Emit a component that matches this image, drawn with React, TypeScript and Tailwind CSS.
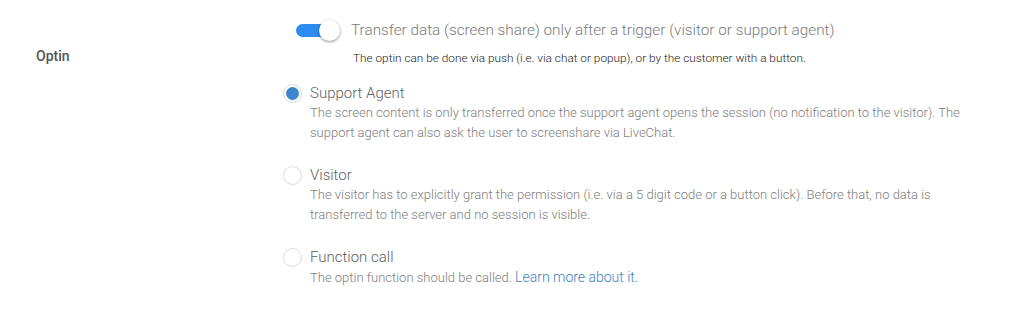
function Radio({ checked }: { checked?: boolean }) {
  return (
    <span className="mt-[1px] flex h-[19px] w-[19px] shrink-0 items-center justify-center rounded-full border border-[#dcdcdc] bg-white">
      {checked && <span className="h-[13px] w-[13px] rounded-full bg-[#3b86cc]" />}
    </span>
  );
}

function Option({ checked, title, children }: { checked?: boolean; title: string; children: React.ReactNode }) {
  return (
    <div className="flex gap-[8px]">
      <Radio checked={checked} />
      <div className="flex flex-col">
        <span className="text-[15px] leading-[20px] font-light text-[#5f5f5f]">{title}</span>
        <p className="text-[13px] leading-[20px] font-light text-[#7d7d7d]">{children}</p>
      </div>
    </div>
  );
}

export default function App() {
  return (
    <div className="flex h-[330px] w-[1026px] bg-white font-['Roboto',sans-serif]">
      <div className="w-[283px] shrink-0 pl-[36px] pt-[44px]">
        <span className="text-[14px] font-medium text-[#555]">Optin</span>
      </div>
      <div className="flex w-[690px] flex-col pt-[19px]">
        <div className="flex items-center pl-[13px]">
          <span className="relative flex h-[21px] w-[43px] items-center">
            <span className="h-[13px] w-[34px] rounded-full bg-[#2d8cf0]" />
            <span className="absolute left-[23px] top-0 h-[21px] w-[21px] rounded-full bg-white shadow-[0_1px_3px_rgba(0,0,0,0.45)]" />
          </span>
          <span className="ml-[12px] text-[15.3px] font-light text-[#7a7a7a]">
            Transfer data (screen share) only after a trigger (visitor or support agent)
          </span>
        </div>
        <p className="mt-[8px] pl-[70px] text-[11.8px] font-light text-[#222]">
          The optin can be done via push (i.e. via chat or popup), or by the customer with a button.
        </p>
        <div className="mt-[15px] flex flex-col gap-[22px]">
          <Option checked title="Support Agent">
            The screen content is only transferred once the support agent opens the session (no notification to the
            visitor). The support agent can also ask the user to screenshare via LiveChat.
          </Option>
          <Option title="Visitor">
            The visitor has to explicitly grant the permission (i.e. via a 5 digit code or a button click). Before that,
            no data is transferred to the server and no session is visible.
          </Option>
          <Option title="Function call">
            The optin function should be called.{" "}
            <a href="#" className="text-[14px] text-[#3a7fc1]">
              Learn more about it.
            </a>
          </Option>
        </div>
      </div>
    </div>
  );
}
